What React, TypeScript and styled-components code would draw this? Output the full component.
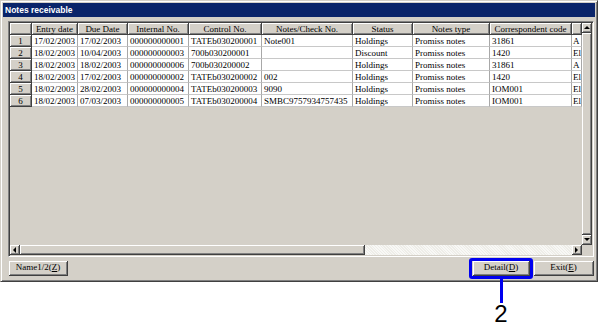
import React from "react";
import styled, { createGlobalStyle, css } from "styled-components";

const Global = createGlobalStyle`
  html, body { margin: 0; padding: 0; background: #ffffff; }
  body { font-family: "Liberation Serif", "Times New Roman", serif; }
`;

const FACE = "#d4d0c8";

const Page = styled.div`
  width: 603px;
  height: 332px;
  position: relative;
`;

const Window = styled.div`
  width: 598px;
  height: 282px;
  box-sizing: border-box;
  background: ${FACE};
  border: 1px solid;
  border-color: ${FACE} #404040 #404040 ${FACE};
  box-shadow: inset 1px 1px 0 #ffffff, inset -1px -1px 0 #808080;
  padding: 2px;
  display: flex;
  flex-direction: column;
`;

const TitleBar = styled.div`
  height: 14px;
  flex: none;
  background: #0a246a;
  color: #ffffff;
  font-family: "Liberation Sans", Arial, sans-serif;
  font-weight: bold;
  font-size: 8.5px;
  line-height: 14px;
  padding-left: 2px;
  white-space: nowrap;
`;

const Body = styled.div`
  flex: 1;
  display: flex;
  flex-direction: column;
  padding: 4px 1px 0 5px;
  gap: 4px;
`;

const Frame = styled.div`
  width: 586px;
  height: 236px;
  box-sizing: border-box;
  border: 1px solid;
  border-color: #808080 #ffffff #ffffff #808080;
  box-shadow: inset 1px 1px 0 #404040, inset -1px -1px 0 ${FACE};
  padding: 1px;
  display: grid;
  grid-template-columns: 572px 10px;
  grid-template-rows: 222px 10px;
`;

const TableArea = styled.div`
  background: ${FACE};
  overflow: hidden;
`;

const Table = styled.div`
  display: grid;
  grid-template-columns: 22px 46px 50px 61px 73px 91px 60px 77px 82px 10px;
  grid-auto-rows: 12px;
  font-size: 9px;
  line-height: 11px;
  color: #000000;
`;

const raised = css`
  box-sizing: border-box;
  background: ${FACE};
  border-right: 1px solid #404040;
  border-bottom: 1px solid #404040;
  box-shadow: inset 1px 1px 0 #ffffff, inset -1px -1px 0 #808080;
`;

const HeaderCell = styled.div`
  ${raised};
  text-align: center;
  white-space: nowrap;
  overflow: hidden;
  padding-top: 1px;
  span {
    text-decoration: underline;
    text-underline-offset: 1px;
    text-decoration-color: #808080;
  }
`;

const RowHead = styled(HeaderCell)``;

const DataCell = styled.div<{ $tight?: boolean }>`
  box-sizing: border-box;
  background: #ffffff;
  border-right: 1px solid #a8a8a8;
  border-bottom: 1px solid #c8c8c8;
  padding: 1px 0 0 ${(p) => (p.$tight ? 1 : 2)}px;
  white-space: nowrap;
  overflow: hidden;
`;

const VScroll = styled.div`
  display: flex;
  flex-direction: column;
`;

const HScroll = styled.div`
  display: flex;
`;

const Thumb = styled.div<{ $grow: number }>`
  ${raised};
  flex: ${(p) => p.$grow};
`;

const Track = styled.div<{ $grow: number }>`
  flex: ${(p) => p.$grow};
  background-color: #eeede8;
  background-image: repeating-linear-gradient(45deg, #f8f8f6 0 1px, transparent 1px 2px);
`;

type Dir = "up" | "down" | "left" | "right";

const arrowShape: Record<Dir, string> = {
  up: "border-left: 3px solid transparent; border-right: 3px solid transparent; border-bottom: 3px solid #000;",
  down: "border-left: 3px solid transparent; border-right: 3px solid transparent; border-top: 3px solid #000;",
  left: "border-top: 3px solid transparent; border-bottom: 3px solid transparent; border-right: 3px solid #000;",
  right: "border-top: 3px solid transparent; border-bottom: 3px solid transparent; border-left: 3px solid #000;",
};

const ArrowButton = styled.div<{ $dir: Dir }>`
  ${raised};
  width: 10px;
  height: 10px;
  flex: none;
  display: flex;
  align-items: center;
  justify-content: center;
  &::after {
    content: "";
    width: 0;
    height: 0;
    ${(p) => arrowShape[p.$dir]}
  }
`;

const Corner = styled.div`
  background: ${FACE};
`;

const ButtonRow = styled.div`
  display: flex;
  align-items: flex-start;
  padding-left: 1px;
  gap: 4px;
`;

const Spacer = styled.div`
  flex: 1;
`;

const Button = styled.div<{ $w: number }>`
  ${raised};
  width: ${(p) => p.$w}px;
  height: 15px;
  font-size: 9px;
  line-height: 13px;
  text-align: center;
  white-space: nowrap;
  color: #000;
`;

const Callout = styled.div`
  position: relative;
`;

const Highlight = styled.div`
  position: absolute;
  left: -4px;
  top: -3px;
  width: 64px;
  height: 21px;
  box-sizing: border-box;
  border: 3px solid #0000f0;
  border-radius: 3px;
  pointer-events: none;
`;

const Leader = styled.div`
  position: absolute;
  left: 27px;
  top: 18px;
  width: 3px;
  height: 24px;
  background: #0000f0;
`;

const Label = styled.div`
  position: absolute;
  left: 18px;
  top: 41px;
  width: 20px;
  text-align: center;
  font-family: "Liberation Sans", Arial, sans-serif;
  font-size: 24px;
  line-height: 24px;
  color: #000;
`;

const headers = [
  "",
  "Entry date",
  "Due Date",
  "Internal No.",
  "Control No.",
  "Notes/Check No.",
  "Status",
  "Notes type",
  "Correspondent code",
  "",
];

const rows: string[][] = [
  ["17/02/2003", "17/02/2003", "000000000001", "TATEb030200001", "Note001", "Holdings", "Promiss notes", "31861", "A"],
  ["18/02/2003", "10/04/2003", "000000000003", "700b030200001", "", "Discount", "Promiss notes", "1420", "El"],
  ["18/02/2003", "18/02/2003", "000000000006", "700b030200002", "", "Holdings", "Promiss notes", "31861", "A"],
  ["18/02/2003", "17/02/2003", "000000000002", "TATEb030200002", "002", "Holdings", "Promiss notes", "1420", "El"],
  ["18/02/2003", "28/02/2003", "000000000004", "TATEb030200003", "9090", "Holdings", "Promiss notes", "IOM001", "El"],
  ["18/02/2003", "07/03/2003", "000000000005", "TATEb030200004", "SMBC9757934757435", "Holdings", "Promiss notes", "IOM001", "El"],
];

export default function App() {
  return (
    <Page>
      <Global />
      <Window>
        <TitleBar>Notes receivable</TitleBar>
        <Body>
          <Frame>
            <TableArea>
              <Table>
                {headers.map((h, i) => (
                  <HeaderCell key={"h" + i}>
                    <span>{h}</span>
                  </HeaderCell>
                ))}
                {rows.map((r, ri) => (
                  <React.Fragment key={ri}>
                    <RowHead>
                      <span>{ri + 1}</span>
                    </RowHead>
                    {r.map((c, ci) => (
                      <DataCell key={ci} $tight={ci === r.length - 1}>
                        {c}
                      </DataCell>
                    ))}
                  </React.Fragment>
                ))}
              </Table>
            </TableArea>
            <VScroll>
              <ArrowButton $dir="up" />
              <Thumb $grow={1} />
              <ArrowButton $dir="down" />
            </VScroll>
            <HScroll>
              <ArrowButton $dir="left" />
              <Thumb $grow={345} />
              <Track $grow={207} />
              <ArrowButton $dir="right" />
            </HScroll>
            <Corner />
          </Frame>
          <ButtonRow>
            <Button $w={59}>
              Name1/2(<u>Z</u>)
            </Button>
            <Spacer />
            <Callout>
              <Button $w={57}>
                Detail(<u>D</u>)
              </Button>
              <Highlight />
              <Leader />
              <Label>2</Label>
            </Callout>
            <Button $w={60}>
              Exit(<u>E</u>)
            </Button>
          </ButtonRow>
        </Body>
      </Window>
    </Page>
  );
}
